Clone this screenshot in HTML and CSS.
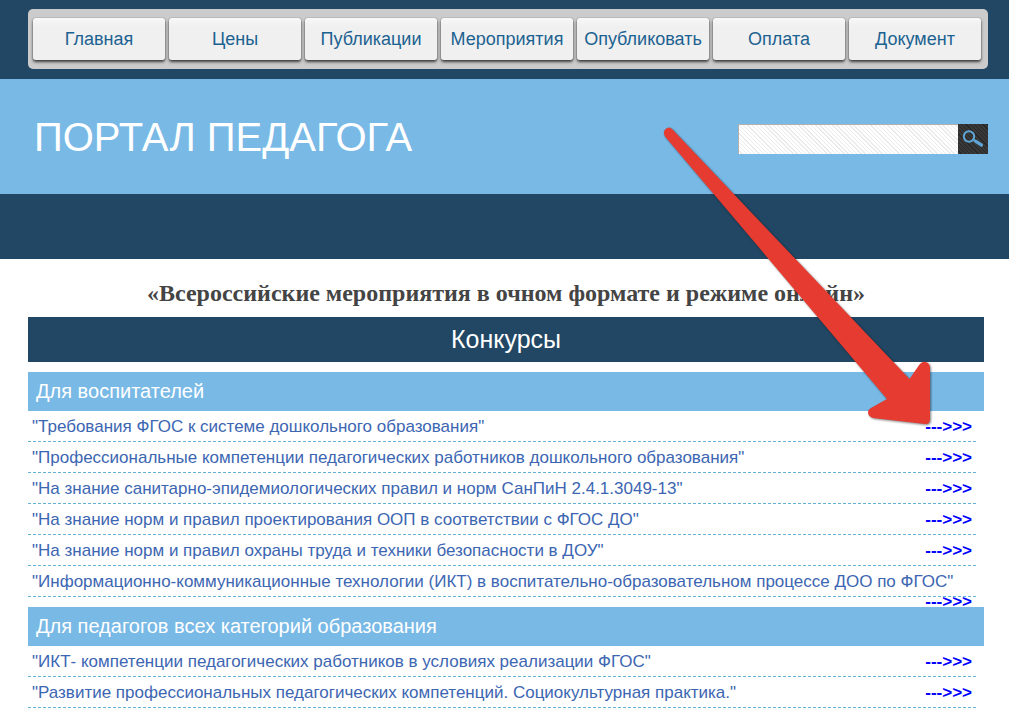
FILE: index.html
```
<!DOCTYPE html>
<html lang="ru">
<head>
<meta charset="utf-8">
<title>Портал педагога</title>
<link rel="stylesheet" href="styles.css">
</head>
<body>
<div class="topbar">
  <nav class="menu">
    <a href="#">Главная</a>
    <a href="#">Цены</a>
    <a href="#">Публикации</a>
    <a href="#">Мероприятия</a>
    <a href="#">Опубликовать</a>
    <a href="#">Оплата</a>
    <a href="#">Документ</a>
  </nav>
</div>
<header class="header">
  <h1 class="logo">ПОРТАЛ ПЕДАГОГА</h1>
  <form class="search">
    <input class="search-field" type="text" aria-label="Поиск">
    <button class="search-button" type="button" aria-label="Найти">
      <svg width="30" height="30" viewBox="0 0 30 30" fill="none" stroke="#5fa6d6">
        <circle cx="11" cy="12.500" r="5.200" stroke-width="2"/>
        <path d="M15 15.500l3 2" stroke-width="2"/>
        <path d="M17.500 17.200l6 4" stroke-width="3.200" stroke-linecap="round"/>
      </svg>
    </button>
  </form>
</header>
<div class="band"></div>
<main class="content">
  <h2 class="title">«Всероссийские мероприятия в очном формате и режиме онлайн»</h2>
  <h2 class="section">Конкурсы</h2>
  <h3 class="group">Для воспитателей</h3>
  <ul class="list">
    <li>"Требования ФГОС к системе дошкольного образования"<a href="#">---&gt;&gt;&gt;</a></li>
    <li>"Профессиональные компетенции педагогических работников дошкольного образования"<a href="#">---&gt;&gt;&gt;</a></li>
    <li>"На знание санитарно-эпидемиологических правил и норм СанПиН 2.4.1.3049-13"<a href="#">---&gt;&gt;&gt;</a></li>
    <li>"На знание норм и правил проектирования ООП в соответствии с ФГОС ДО"<a href="#">---&gt;&gt;&gt;</a></li>
    <li>"На знание норм и правил охраны труда и техники безопасности в ДОУ"<a href="#">---&gt;&gt;&gt;</a></li>
    <li>"Информационно-коммуникационные технологии (ИКТ) в воспитательно-образовательном процессе ДОО по ФГОС"<a href="#">---&gt;&gt;&gt;</a></li>
  </ul>
  <h3 class="group">Для педагогов всех категорий образования</h3>
  <ul class="list">
    <li>"ИКТ- компетенции педагогических работников в условиях реализации ФГОС"<a href="#">---&gt;&gt;&gt;</a></li>
    <li>"Развитие профессиональных педагогических компетенций. Социокультурная практика."<a href="#">---&gt;&gt;&gt;</a></li>
  </ul>
</main>
<svg class="pointer" width="280" height="310" viewBox="660 122 280 310" aria-hidden="true">
  <path d="M672 129L909.500 379L919.500 364.500Q922 361 926 362Q930 363.500 930 368V419Q930 424.500 925 424L873 418Q868 416.500 868 412Q868 409.500 871 408L887 399L665 136.500Q662.500 132 665.500 129Q669 126 672 129Z" fill="#e53b30"/>
</svg>
</body>
</html>
```
FILE: styles.css
```
body {
  position: relative;
  margin: 0;
  background: #fff;
  font-family: "Liberation Sans", Arial, sans-serif;
}

.topbar {
  padding: 9px 21px 10px 28px;
  background: #214764;
}

.menu {
  display: flex;
  gap: 4px;
  padding: 9px 7px 9px 5px;
  border-radius: 5px;
  background: #cbcbcb;
}

.menu a {
  flex: 1 1 0;
  border-radius: 3px;
  background: linear-gradient(#f8f8f8, #f0f0f0 20%);
  box-shadow: 0 0 1px rgba(0, 0, 0, 0.6), 0 2px 3px rgba(0, 0, 0, 0.7);
  color: #1c6291;
  font-size: 18px;
  line-height: 42px;
  text-align: center;
  text-decoration: none;
}

.header {
  display: flex;
  align-items: center;
  justify-content: space-between;
  height: 115px;
  padding: 0 21px 0 34px;
  box-sizing: border-box;
  background: #78b9e6;
}

.logo {
  margin: 0;
  color: #fff;
  font-size: 40px;
  font-weight: 400;
  line-height: 48px;
}

.search {
  display: flex;
  margin-top: 4px;
}

.search-field {
  width: 220px;
  height: 30px;
  padding: 0 8px;
  box-sizing: border-box;
  border: 0;
  border-top: 1px solid #b5b0b0;
  border-left: 1px solid #b5b0b0;
  border-radius: 0;
  background: repeating-linear-gradient(45deg, #fff 0 2px, #ebebeb 2px 3px);
  font-size: 16px;
}

.search-button {
  width: 30px;
  height: 30px;
  padding: 0;
  border: 0;
  background: repeating-linear-gradient(45deg, #383838 0 2px, #272727 2px 3px);
}

.search-button svg {
  display: block;
}

.band {
  height: 65px;
  background: #214764;
}

.content {
  padding: 20px 25px 7px 28px;
}

.title {
  margin: 0 0 10px;
  color: #444;
  font-family: "Liberation Serif", "Times New Roman", serif;
  font-size: 24px;
  line-height: 28px;
  text-align: center;
}

.section {
  margin: 0;
  background: #214764;
  color: #fff;
  font-size: 25px;
  font-weight: 400;
  line-height: 45px;
  text-align: center;
}

.group {
  margin: 10px 0 0;
  padding: 0 8px;
  background: #78b9e6;
  color: #fff;
  font-size: 20px;
  font-weight: 400;
  line-height: 39px;
}

.list {
  margin: 0 8px 0 0;
  padding: 0;
  list-style: none;
  color: #3c66b2;
  font-size: 17px;
  line-height: 20px;
}

.list li {
  padding: 6px 4px 4px;
  border-bottom: 1px dashed #63b3d6;
}

.list a {
  float: right;
  color: #00f;
  font-weight: 700;
  text-decoration: none;
}

.pointer {
  position: absolute;
  top: 122px;
  left: 660px;
  filter: drop-shadow(1px 1px 1px rgba(0, 0, 0, 0.5));
  pointer-events: none;
}
```
